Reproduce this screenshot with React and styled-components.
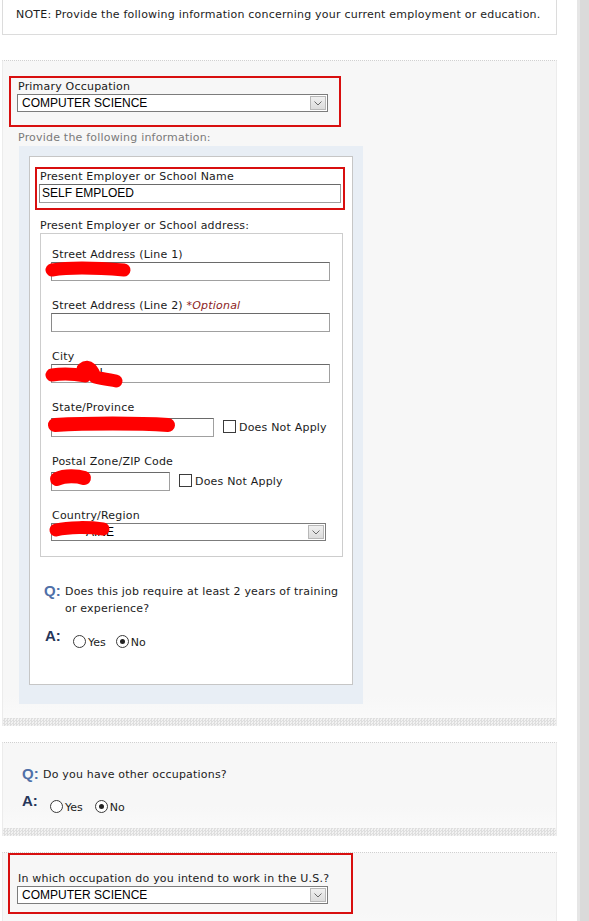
import React from 'react';
import styled, { createGlobalStyle } from 'styled-components';

const GlobalStyle = createGlobalStyle`
  html, body {
    margin: 0;
    padding: 0;
    background: #fff;
  }
  body {
    font-family: "DejaVu Sans", Verdana, sans-serif;
    font-size: 11px;
    letter-spacing: 0.2px;
    color: #1c1c1c;
  }
`;

const Page = styled.div`
  display: flex;
  width: 589px;
  height: 921px;
  overflow: hidden;
`;

const Content = styled.div`
  width: 577px;
  flex-shrink: 0;
`;

const ScrollTrack = styled.div`
  width: 9px;
  border-left: 3px solid #e6e6e6;
  background: #dadada;
`;

const Note = styled.div`
  margin-left: 2px;
  width: 527px;
  padding: 8px 13px 13px 13px;
  border: 1px solid #dcdcdc;
  border-top: none;
  line-height: 13px;
  letter-spacing: 0.22px;
`;

const Panel = styled.div`
  margin: ${p => p.$top}px 0 0 2px;
  width: 553px;
  border: 1px solid #ececec;
  border-top: 1px dotted #d0d0d0;
  border-bottom: none;
  background: linear-gradient(to bottom, #f7f7f7 0, #f7f7f7 calc(100% - 30px), #fbfbfb 100%);
  padding-top: ${p => p.$padTop || 0}px;
`;

const PanelBand = styled.div`
  height: 8px;
  margin-top: ${p => p.$gap}px;
  background-color: #eeeeee;
  background-image: repeating-conic-gradient(#dedede 0 25%, #f2f2f2 0 50%);
  background-size: 3px 3px;
`;

const RedBox = styled.div`
  margin-left: ${p => p.$left}px;
  width: ${p => p.$width}px;
  border: 2px solid #d80f0f;
  padding: ${p => p.$pad};
  box-sizing: border-box;
`;

const Label = styled.div`
  line-height: ${p => p.$lh || 14}px;
  padding-left: 1px;
  color: #1a1a1a;
  white-space: nowrap;
`;

const Optional = styled.span`
  color: #8b1c1c;
  font-style: italic;
`;

const TextBox = styled.div`
  position: relative;
  box-sizing: border-box;
  width: ${p => p.$width}px;
  height: ${p => p.$height || 19}px;
  border: 1px solid #a0a0a0;
  border-top-color: #6a6a6a;
  border-left-color: #8a8a8a;
  background: #fff;
  font-family: "Liberation Sans", Arial, sans-serif;
  font-size: 12px;
  letter-spacing: 0;
  line-height: 17px;
  padding-left: 2px;
  color: #000;
  white-space: nowrap;
  overflow: hidden;
`;

const SelectBox = styled(TextBox)`
  border: 1px solid #7c7c7c;
  padding-left: 4px;
  line-height: 16px;
`;

const ArrowButton = styled.div`
  position: absolute;
  top: 1px;
  right: 1px;
  bottom: 1px;
  width: 16px;
  box-sizing: border-box;
  border: 1px solid #b8b8b8;
  background: linear-gradient(#f0f0f0, #dcdcdc);
  display: flex;
  align-items: center;
  justify-content: center;
`;

const Hint = styled.div`
  margin: 4px 0 0 15px;
  line-height: 13px;
  color: #7a7a7a;
`;

const BlueArea = styled.div`
  margin: 2px 0 0 16px;
  width: 324px;
  padding: 10px 10px 19px 10px;
  background: #e8eef5;
`;

const WhiteBox = styled.div`
  border: 1px solid #c6c6c6;
  background: #fff;
  padding: 10px 0 34px 0;
`;

const SubHeading = styled.div`
  margin: 9px 0 0 10px;
  line-height: 14px;
`;

const AddressBox = styled.div`
  margin-left: 10px;
  width: 279px;
  border: 1px solid #cdcdcd;
  padding: 13px 12px 15px 10px;
`;

const Field = styled.div`
  position: relative;
  margin-bottom: ${p => (p.$last ? 0 : 17)}px;
`;

const InputRow = styled.div`
  display: flex;
  align-items: center;
  padding-top: 3px;
`;

const CheckLabel = styled.label`
  display: flex;
  align-items: center;
  margin-left: 9px;
  line-height: 14px;
`;

const CheckBox = styled.span`
  width: 13px;
  height: 13px;
  box-sizing: border-box;
  border: 1px solid #3b3b3b;
  background: #fff;
  margin-right: 3px;
  margin-top: -3px;
`;

const Scribble = styled.svg`
  position: absolute;
  left: ${p => p.$x}px;
  top: ${p => p.$y}px;
  overflow: visible;
  pointer-events: none;
`;

const QRow = styled.div`
  display: flex;
  align-items: flex-start;
  margin: ${p => p.$margin};
`;

const QMark = styled.span`
  font-family: "Liberation Sans", Arial, sans-serif;
  font-weight: bold;
  font-size: 15px;
  letter-spacing: 0;
  line-height: 17px;
  color: ${p => (p.$answer ? '#26365a' : '#4f70a8')};
  width: ${p => p.$w}px;
  flex-shrink: 0;
`;

const QText = styled.div`
  line-height: 17px;
  padding-top: 1px;
  width: ${p => p.$width}px;
`;

const RadioGroup = styled.div`
  display: flex;
  align-items: center;
  padding-top: 5px;
`;

const RadioOption = styled.label`
  display: flex;
  align-items: center;
  margin-right: ${p => p.$gap || 9}px;
`;

const Radio = styled.span`
  width: 13px;
  height: 13px;
  box-sizing: border-box;
  border-radius: 50%;
  border: 1px solid #3a3a3a;
  background: #fff;
  display: flex;
  align-items: center;
  justify-content: center;
  margin-right: 2px;
  &::after {
    content: '';
    width: 5px;
    height: 5px;
    border-radius: 50%;
    background: ${p => (p.$checked ? '#222' : 'transparent')};
  }
`;

const RadioText = styled.span`
  line-height: 14px;
  padding-top: 4px;
  letter-spacing: 0;
`;

function Chevron() {
  return (
    <svg width="8" height="5" viewBox="0 0 8 5">
      <path d="M0.5 0.5 L4 4 L7.5 0.5" fill="none" stroke="#6a6a6a" strokeWidth="1" />
    </svg>
  );
}

function Select({ width, children }) {
  return (
    <SelectBox $width={width} $height={18}>
      {children}
      <ArrowButton><Chevron /></ArrowButton>
    </SelectBox>
  );
}

function Blot({ x, y, w, h, paths }) {
  return (
    <Scribble $x={x} $y={y} width={w} height={h} viewBox={`0 0 ${w} ${h}`}>
      {paths.map((p, i) => (
        <path key={i} d={p.d} fill="none" stroke="#f00" strokeWidth={p.s} strokeLinecap="round" strokeLinejoin="round" />
      ))}
    </Scribble>
  );
}

function YesNo({ answer, gap }) {
  return (
    <RadioGroup>
      <RadioOption $gap={gap}>
        <Radio $checked={answer === 'yes'} />
        <RadioText>Yes</RadioText>
      </RadioOption>
      <RadioOption>
        <Radio $checked={answer === 'no'} />
        <RadioText>No</RadioText>
      </RadioOption>
    </RadioGroup>
  );
}

function App() {
  return (
    <Page>
      <GlobalStyle />
      <Content>
        <Note>NOTE: Provide the following information concerning your current employment or education.</Note>

        <Panel $top={25} $padTop={15}>
          <RedBox $left={6} $width={332} $pad="2px 6px 13px 6px">
            <Label>Primary Occupation</Label>
            <Select width={311}>COMPUTER SCIENCE</Select>
          </RedBox>
          <Hint>Provide the following information:</Hint>
          <BlueArea>
            <WhiteBox>
              <RedBox $left={5} $width={310} $pad="1px 2px 5px 2px">
                <Label>Present Employer or School Name</Label>
                <TextBox $width={302}>SELF EMPLOED</TextBox>
              </RedBox>
              <SubHeading>Present Employer or School address:</SubHeading>
              <AddressBox>
                <Field>
                  <Label $lh={15}>Street Address (Line 1)</Label>
                  <TextBox $width={279} />
                  <Blot x={-6} y={15} w={86} h={16} paths={[{ d: 'M7 8 C 25 5, 55 6, 79 8', s: 13 }]} />
                </Field>
                <Field>
                  <Label $lh={15}>Street Address (Line 2) <Optional>*Optional</Optional></Label>
                  <TextBox $width={279} />
                </Field>
                <Field>
                  <Label $lh={15}>City</Label>
                  <TextBox $width={279}>&nbsp;&nbsp;&nbsp;&nbsp;&nbsp;&nbsp;&nbsp;&nbsp;&nbsp;&nbsp;&nbsp;IN</TextBox>
                  <Blot
                    x={-6}
                    y={10}
                    w={80}
                    h={30}
                    paths={[
                      { d: 'M7 16 C 20 14, 30 15, 40 17', s: 13 },
                      { d: 'M38 10 C 44 5, 48 12, 50 18 C 58 20, 66 21, 71 22', s: 13 },
                    ]}
                  />
                </Field>
                <Field>
                  <Label $lh={15}>State/Province</Label>
                  <InputRow>
                    <TextBox $width={163} />
                    <CheckLabel><CheckBox />Does Not Apply</CheckLabel>
                  </InputRow>
                  <Blot x={-3} y={17} w={128} h={16} paths={[{ d: 'M7 8 C 40 6, 90 6, 120 8', s: 14 }]} />
                </Field>
                <Field>
                  <Label $lh={15}>Postal Zone/ZIP Code</Label>
                  <InputRow>
                    <TextBox $width={119} />
                    <CheckLabel><CheckBox />Does Not Apply</CheckLabel>
                  </InputRow>
                  <Blot x={-1} y={16} w={42} h={17} paths={[{ d: 'M7 9 C 15 5, 28 6, 34 8', s: 14 }]} />
                </Field>
                <Field $last>
                  <Label $lh={15}>Country/Region</Label>
                  <Select width={275}>&nbsp;&nbsp;&nbsp;&nbsp;&nbsp;&nbsp;&nbsp;&nbsp;&nbsp;AINE</Select>
                  <Blot x={-2} y={13} w={62} h={17} paths={[{ d: 'M7 9 C 20 6, 40 6, 54 8', s: 13 }]} />
                </Field>
              </AddressBox>
              <QRow $margin="25px 0 0 14px">
                <QMark $w={21}>Q:</QMark>
                <QText $width={278}>Does this job require at least 2 years of training or experience?</QText>
              </QRow>
              <QRow $margin="10px 0 0 15px">
                <QMark $answer $w={28}>A:</QMark>
                <YesNo answer="no" gap={10} />
              </QRow>
            </WhiteBox>
          </BlueArea>
          <PanelBand $gap={14} />
        </Panel>

        <Panel $top={16} $padTop={22}>
          <QRow $margin="0 0 0 19px">
            <QMark $w={21}>Q:</QMark>
            <QText $width={400}>Do you have other occupations?</QText>
          </QRow>
          <QRow $margin="9px 0 0 19px">
            <QMark $answer $w={28}>A:</QMark>
            <YesNo answer="no" gap={12} />
          </QRow>
          <PanelBand $gap={13} />
        </Panel>

        <Panel $top={16} $padTop={0}>
          <RedBox $left={5} $width={345} $pad="17px 7px 8px 7px">
            <Label>In which occupation do you intend to work in the U.S.?</Label>
            <Select width={311}>COMPUTER SCIENCE</Select>
          </RedBox>
          <PanelBand $gap={20} />
        </Panel>
      </Content>
      <ScrollTrack />
    </Page>
  );
}

export default App;
